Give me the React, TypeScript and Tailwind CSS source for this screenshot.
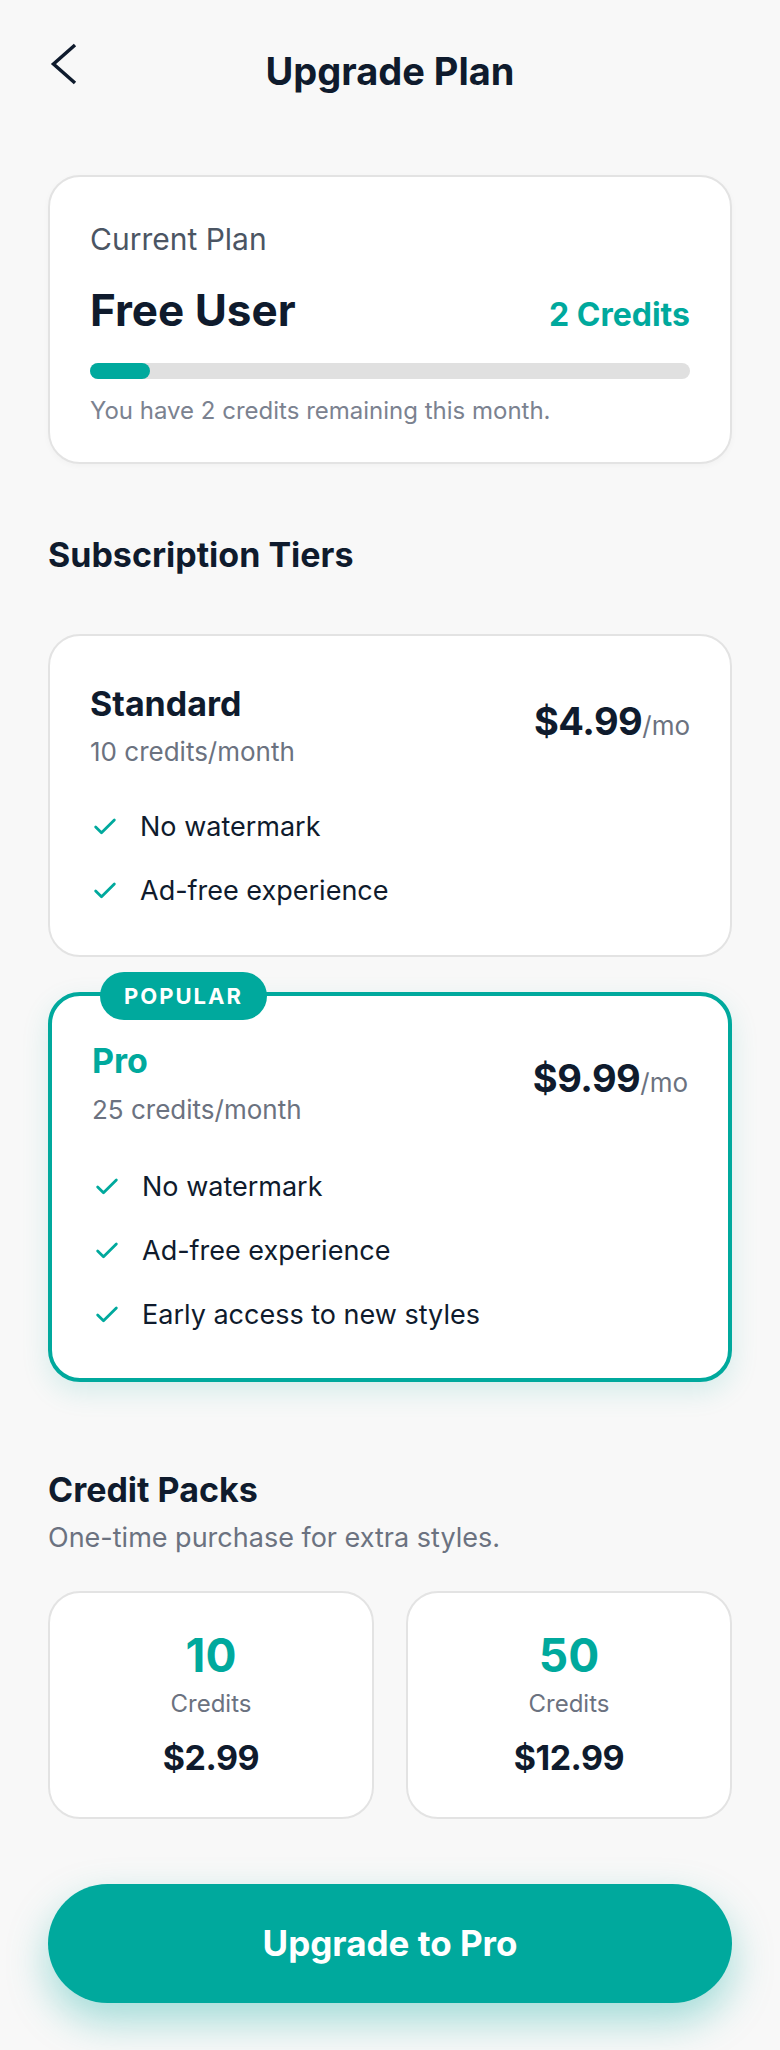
import type { ReactNode } from "react";
import { Check } from "lucide-react";

function Feature({ children }: { children: ReactNode }) {
  return (
    <li className="flex items-center gap-[21px] text-[27px] leading-[36px] text-[#0f1b2d]">
      <Check size={28} strokeWidth={2.4} className="ml-px shrink-0 text-[#00a99d]" />
      <span>{children}</span>
    </li>
  );
}

function Price({ amount }: { amount: string }) {
  return (
    <div className="mt-[14px] flex items-baseline">
      <span className="text-[38px] font-bold leading-[46px] tracking-[-0.5px] text-[#0f1b2d]">
        {amount}
      </span>
      <span className="text-[26px] leading-[46px] text-[#6b7280]">/mo</span>
    </div>
  );
}

function Pack({ count, price }: { count: string; price: string }) {
  return (
    <div className="flex flex-col items-center rounded-[32px] border-2 border-[#e3e3e3] bg-white pt-[36px] pb-[39px]">
      <span className="text-[46px] font-bold leading-[52px] text-[#00a99d]">{count}</span>
      <span className="mt-[8px] text-[24px] leading-[30px] text-[#6b7280]">Credits</span>
      <span className="mt-[19px] text-[34px] font-bold leading-[40px] tracking-[-0.5px] text-[#0f1b2d]">
        {price}
      </span>
    </div>
  );
}

export default function App() {
  return (
    <div className="min-h-screen bg-[#f8f8f8] px-12 pt-[48px] pb-[50px] font-['Inter',sans-serif]">
      {/* header */}
      <div className="grid grid-cols-[40px_1fr_40px] items-start">
        <svg width="30" height="42" viewBox="0 0 30 42" className="mt-[-5px]" fill="none">
          <path d="M27 2 L5.5 21 L27 40" stroke="#0f1b2d" strokeWidth="3.5" strokeLinejoin="miter" />
        </svg>
        <h1 className="text-center text-[38px] font-bold leading-[46px] text-[#0f1b2d]">Upgrade Plan</h1>
        <div />
      </div>

      {/* current plan */}
      <div className="mt-[81px] rounded-[32px] border-2 border-[#e3e3e3] bg-white px-[40px] pt-[44px] pb-[35px] shadow-[0_2px_6px_rgba(0,0,0,0.03)]">
        <p className="text-[30px] leading-[36px] text-[#4b5563]">Current Plan</p>
        <div className="mt-[27px] flex items-baseline justify-between">
          <span className="text-[44px] font-bold leading-[52px] text-[#0f1b2d]">Free User</span>
          <span className="text-[32px] font-bold leading-[52px] text-[#00a99d]">2 Credits</span>
        </div>
        <div className="mt-[22px] h-[16px] rounded-full bg-[#e0e0e0]">
          <div className="h-full w-[10%] rounded-full bg-[#00a99d]" />
        </div>
        <p className="mt-[16px] text-[24px] leading-[32px] text-[#7b8290]">
          You have 2 credits remaining this month.
        </p>
      </div>

      {/* tiers */}
      <h2 className="mt-[71px] text-[34px] font-bold leading-[40px] text-[#0f1b2d]">Subscription Tiers</h2>

      <div className="mt-[59px] rounded-[32px] border-2 border-[#e3e3e3] bg-white px-[40px] pt-[48px] pb-[46px]">
        <div className="flex items-start justify-between">
          <div>
            <h3 className="text-[34px] font-bold leading-[40px] text-[#0f1b2d]">Standard</h3>
            <p className="mt-[12px] text-[26px] leading-[32px] text-[#6b7280]">10 credits/month</p>
          </div>
          <Price amount="$4.99" />
        </div>
        <ul className="mt-[41px] flex flex-col gap-[28px]">
          <Feature>No watermark</Feature>
          <Feature>Ad-free experience</Feature>
        </ul>
      </div>

      <div className="relative mt-[35px] rounded-[32px] border-4 border-[#00a99d] bg-white px-[40px] pt-[45px] pb-[45px] shadow-[0_10px_28px_rgba(0,169,157,0.14)]">
        <span className="absolute top-[-24px] left-[48px] flex h-[48px] items-center rounded-full bg-[#00a99d] px-[24px] text-[22px] font-bold tracking-[2px] text-white">
          POPULAR
        </span>
        <div className="flex items-start justify-between">
          <div>
            <h3 className="text-[34px] font-bold leading-[40px] text-[#00a99d]">Pro</h3>
            <p className="mt-[13px] text-[26px] leading-[32px] text-[#6b7280]">25 credits/month</p>
          </div>
          <Price amount="$9.99" />
        </div>
        <ul className="mt-[43px] flex flex-col gap-[28px]">
          <Feature>No watermark</Feature>
          <Feature>Ad-free experience</Feature>
          <Feature>Early access to new styles</Feature>
        </ul>
      </div>

      {/* credit packs */}
      <h2 className="mt-[88px] text-[34px] font-bold leading-[40px] text-[#0f1b2d]">Credit Packs</h2>
      <p className="mt-[10px] text-[27px] leading-[36px] text-[#6b7280]">One-time purchase for extra styles.</p>

      <div className="mt-[35px] grid grid-cols-2 gap-[32px]">
        <Pack count="10" price="$2.99" />
        <Pack count="50" price="$12.99" />
      </div>

      <button className="mt-[65px] flex h-[119px] w-full items-center justify-center rounded-full bg-[#00a99d] text-[35px] font-bold text-white shadow-[0_18px_40px_rgba(0,169,157,0.35)]">
        Upgrade to Pro
      </button>
    </div>
  );
}
